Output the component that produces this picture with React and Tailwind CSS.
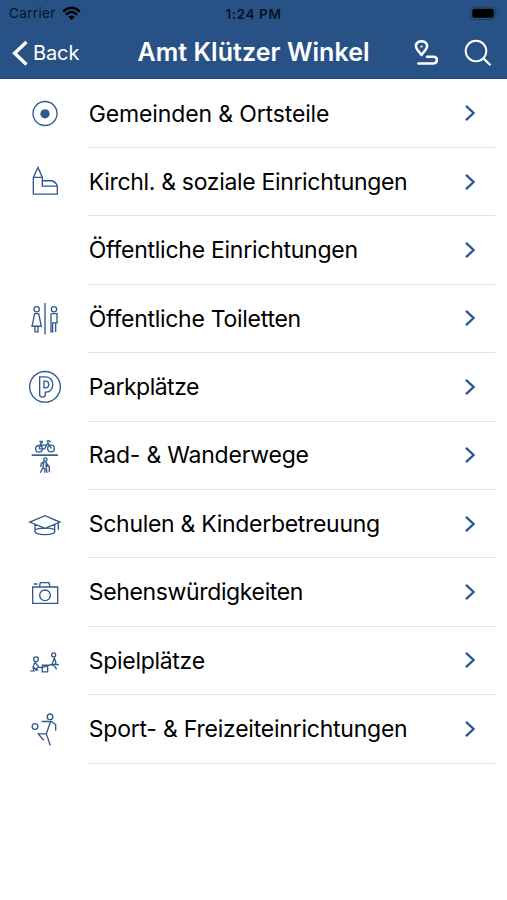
const rows = [
  {
    label: 'Gemeinden & Ortsteile', track: 'tracking-[-0.14px]', top: -5.4,
    icon: (<><circle cx="75" cy="68" r="36" /><circle cx="75" cy="69" r="14" fill="currentColor" stroke="none" /></>),
  },
  {
    label: 'Kirchl. & soziale Einrichtungen', track: 'tracking-[-0.33px]', top: 4.8,
    icon: <path d="M40 116V66L54 36L67 66V92H112V116ZM40 66H67M67 76H95Q108 79 112 92" />,
  },
  { label: 'Öffentliche Einrichtungen', track: 'tracking-[-0.26px]', top: 0, icon: null },
  {
    label: 'Öffentliche Toiletten', track: 'tracking-[-0.28px]', top: 1.2,
    icon: (<><circle cx="50" cy="47" r="8" /><circle cx="102" cy="47" r="8" /><path d="M75 28V123M44 60H56L64 98H36ZM45 98V115H54V98M93 60H111V88H107V115M93 60V115H98V88H107" /></>),
  },
  {
    label: 'Parkplätze', track: 'tracking-[-0.5px]', top: -0.6,
    icon: (<><circle cx="75" cy="74" r="46" /><path d="M59 44H78C105 44 105 90 78 90H76V98C76 107 59 107 59 98ZM72 57H77C89 57 89 77 77 77H72Z" /></>),
  },
  {
    label: 'Rad- & Wanderwege', track: 'tracking-[-0.22px]', top: 0.6,
    icon: (<><circle cx="57" cy="54" r="10" /><circle cx="93" cy="53" r="10" /><path d="M57 54L63 36H68M57 54H74L84 36L94 53M63 43H81M80 32L86 29L92 34M58 32H69" /><path d="M35 73H114" strokeWidth="5" /><circle cx="76" cy="86" r="5" /><path d="M71 93L64 98L62 108M71 93L79 95L78 107L81 126M71 93L69 110L61 126M69 110L75 116L74 126M79 97L88 108V124M78 107L86 105" /></>),
  },
  {
    label: 'Schulen & Kinderbetreuung', track: 'tracking-[-0.3px]', top: -4.2,
    icon: <path d="M29 65L75 46L120 65L75 84ZM45 73V88C44 94 46 98 50 99C63 104 87 104 100 99C105 97 105 93 104 88V73M45 88Q57 82 75 84Q93 81 104 88M115 68V88" />,
  },
  {
    label: 'Sehenswürdigkeiten', track: 'tracking-[-0.36px]', top: 201,
    icon: (<><path d="M38 258H113V307H38ZM58 258L61 245H87L90 258M41 249H52" /><circle cx="75" cy="283" r="16" /></>),
  },
  {
    label: 'Spielplätze', track: 'tracking-[-0.3px]', top: -13.8,
    icon: (<><circle cx="48" cy="56" r="7" /><circle cx="101" cy="43" r="6" /><path d="M45 65L39 79L42 91H31M45 65L56 79L47 86L40 79M56 80L66 81L92 72H117M67 74H83V94H67ZM103 51L108 68L97 76M103 51L98 68L92 74M103 76L110 86M47 90L55 87" /></>),
  },
  {
    label: 'Sport- & Freizeiteinrichtungen', track: 'tracking-[-0.23px]', top: 191.4,
    icon: (<><circle cx="90" cy="230" r="8.5" /><circle cx="45" cy="259" r="8.5" /><path d="M65 244H94L107 253V272M91 246L79 281L91 316M79 281H55L71 300" /></>),
  },
];

function StatusBar() {
  return (
    <div className="relative flex h-[27px] items-center justify-between pr-[8px] pl-[9px] text-[13.5px] text-[#07131f]">
      <div className="flex items-center gap-[6px]">
        <span className="tracking-[0.35px]">Carrier</span>
        <svg width="19" height="15" viewBox="0 0 19 15" fill="none" stroke="#000" strokeWidth="2.4">
          <path d="M1.2 5.5Q9.5-2 17.8 5.5M4 8.6Q9.5 3.6 15 8.6" />
          <path d="M6.3 10.8Q9.5 8 12.7 10.8L9.5 14Z" fill="#000" stroke="none" />
        </svg>
      </div>
      <span className="absolute inset-x-0 pt-px text-center text-[13.5px] font-semibold tracking-[0.6px]">1:24 PM</span>
      <svg width="30" height="15" viewBox="0 0 30 15">
        <rect x="1.5" y="1" width="25" height="12.5" rx="4" fill="none" stroke="#1c3d63" />
        <rect x="3.3" y="2.8" width="21.5" height="9" rx="2" fill="#000" />
        <path d="M28 5.3q2 2 0 4Z" fill="#1c3d63" />
      </svg>
    </div>
  );
}

export default function App() {
  return (
    <div className="h-[900px] w-[507px] overflow-hidden bg-white font-[Inter,sans-serif] text-black">
      <header className="h-[79px] border-b border-[#1f487c] bg-[#285285]">
        <StatusBar />
        <div className="relative flex h-[51px] items-center justify-between pr-[15px] pl-[12px] text-white">
          <div className="flex items-center gap-[4px]">
            <svg width="17" height="28" viewBox="0 0 17 28" fill="none" stroke="currentColor" strokeWidth="3.4">
              <path d="M14.5 3L2.6 14.2L14.5 25.5" />
            </svg>
            <span className="text-[20px] tracking-[-0.1px]">Back</span>
          </div>
          <h1 className="absolute inset-x-0 pt-px text-center text-[25px] font-semibold tracking-[0.06px]">Amt Klützer Winkel</h1>
          <div className="flex items-center gap-[25px]">
            <svg width="25" height="28" viewBox="0 0 25 28" fill="none" stroke="currentColor" strokeWidth="2.5" strokeLinecap="round">
              <path d="M7.5 16L3.4 10.8C0 6 3 2.3 7.5 2.3S15 6 11.6 10.8Z" strokeLinejoin="round" />
              <circle cx="7.5" cy="7.6" r="0.8" strokeWidth="0.8" />
              <path d="M13 17.8H19.5C24 17.8 24 24.4 19.5 24.4H4.3" />
            </svg>
            <svg width="28" height="28" viewBox="0 0 28 28" fill="none" stroke="currentColor" strokeWidth="2">
              <circle cx="12" cy="12" r="10.3" />
              <path d="M19.3 19.3L26.5 26.3" strokeWidth="2.3" />
            </svg>
          </div>
        </div>
      </header>
      <ul className="pt-[0.6px]">
        {rows.map((row) => (
          <li key={row.label} className="flex h-[68.4px] items-center pl-[20px]">
            <svg className="shrink-0 text-[#31598d]" width="50" height="50" viewBox={`0 ${row.top} 150 150`} fill="none" stroke="currentColor" strokeWidth="4">
              {row.icon}
            </svg>
            <div className="mr-[12px] ml-[18px] flex h-full flex-1 items-center justify-between border-b border-[#e4e4e5] pr-[19px] pl-[0.8px]">
              <span className={`pt-px text-[23px] whitespace-nowrap ${row.track}`}>{row.label}</span>
              <svg className="text-[#295594]" width="12" height="18" viewBox="0 0 12 18" fill="none" stroke="currentColor" strokeWidth="2.3">
                <path d="M2 1.8L9.6 9L2 16.2" />
              </svg>
            </div>
          </li>
        ))}
      </ul>
    </div>
  );
}
